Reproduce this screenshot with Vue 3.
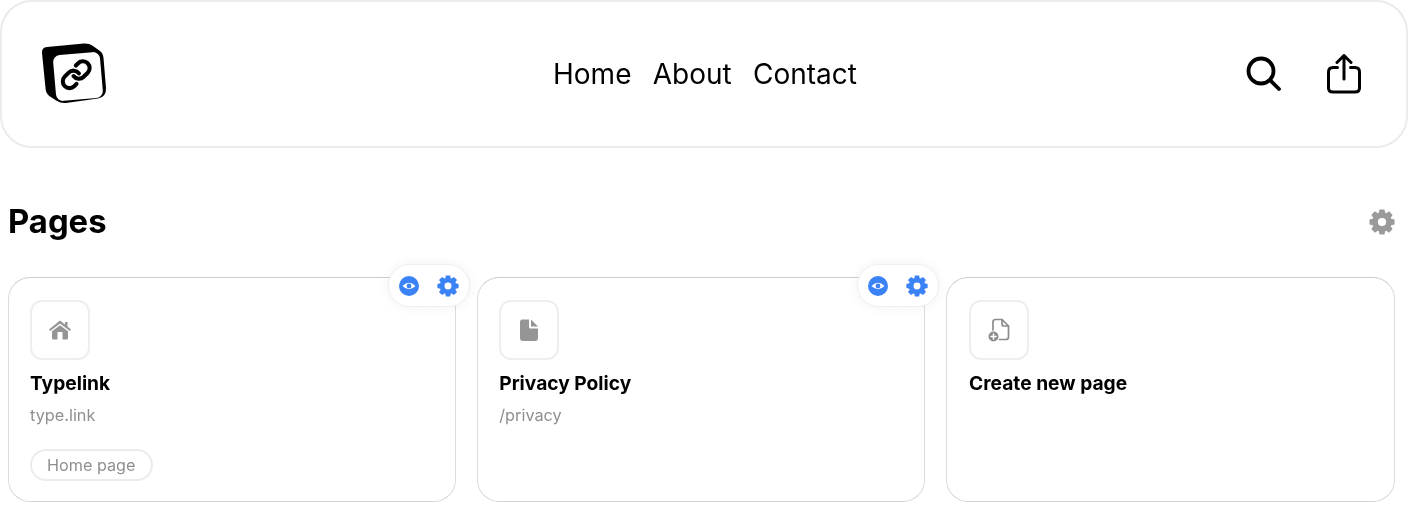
<template>
  <div class="page">
    <header class="topbar">
      <svg class="logo" width="70" height="66" viewBox="0 0 70 66">
        <path d="M7 6 L44 2.6 Q49 2.300 53 5 L60 10 Q63 12 63.500 17 L66 47 Q66.500 56 58 57.500 L26 62 Q21 62.500 17 60 L10 55.500 Q6 53 5.600 48 L2 12 Q1.600 6.500 7 6 Z" fill="#000" />
        <rect x="14.500" y="12.500" width="47" height="46" rx="7" fill="#fff" transform="rotate(-5 38 35.500)" />
        <g transform="translate(20 17.500) scale(1.350)" fill="none" stroke="#000" stroke-width="3" stroke-linecap="round" stroke-linejoin="round">
          <path d="M10 13a5 5 0 0 0 7.540.540l3-3a5 5 0 0 0-7.070-7.070l-1.720 1.710" />
          <path d="M14 11a5 5 0 0 0-7.540-.540l-3 3a5 5 0 0 0 7.070 7.070l1.710-1.710" />
        </g>
      </svg>
      <nav class="nav">
        <a v-for="item in navItems" :key="item">{{ item }}</a>
      </nav>
      <div class="actions">
        <svg width="38" height="38" viewBox="0 0 38 38" fill="none" stroke="#000" stroke-width="3.800" stroke-linecap="round">
          <circle cx="16" cy="16" r="12.500" />
          <path d="M25 25 L34 34" />
        </svg>
        <svg width="34" height="40" viewBox="0 0 34 40" fill="none" stroke="#000" stroke-width="3" stroke-linecap="round" stroke-linejoin="round">
          <path d="M17 25 V2 M10 8.500 L17 1.500 L24 8.500" />
          <path d="M10.500 13.500 H6 Q1.500 13.500 1.500 18 V34 Q1.500 38 6 38 H28 Q32.500 38 32.500 34 V18 Q32.500 13.500 28 13.500 H23.500" />
        </svg>
      </div>
    </header>

    <div class="section-head">
      <h1>Pages</h1>
      <svg class="section-gear" width="26" height="26" viewBox="0 0 24 24"><path :d="gearPath" fill="#9a9a9a" fill-rule="evenodd" /></svg>
    </div>

    <div class="cards">
      <div v-for="card in cards" :key="card.title" class="card">
        <div v-if="card.tools" class="tools">
          <svg width="20" height="20" viewBox="0 0 20 20">
            <circle cx="10" cy="10" r="10" fill="#3b82f6" />
            <path d="M3.500 10 Q10 3.500 16.500 10 Q10 16.500 3.500 10 Z" fill="#fff" />
            <circle cx="10" cy="10" r="2.400" fill="#3b82f6" />
          </svg>
          <svg width="22" height="22" viewBox="0 0 24 24"><path :d="gearPath" fill="#3b82f6" fill-rule="evenodd" /></svg>
        </div>
        <div class="icon-box">
          <svg v-if="card.icon === 'home'" width="24" height="24" viewBox="0 0 24 24" fill="#959595">
            <path d="M12 2.500 L17 6.500 V4 H19.500 V8.500 L23 11.500 L21.800 13 L12 5.400 L2.200 13 L1 11.500 Z" />
            <path fill-rule="evenodd" d="M12 7.200 L20 13.300 V20 Q20 21.500 18.500 21.500 H5.500 Q4 21.500 4 20 V13.300 Z M9.500 14 V21.500 H14.500 V14 Z" />
          </svg>
          <svg v-else-if="card.icon === 'doc'" width="24" height="24" viewBox="0 0 24 24" fill="#959595">
            <path d="M5.500 1.500 H12 V9 Q12 10.500 13.500 10.500 H21 V20 Q21 23 18 23 H6 Q3 23 3 20 V4 Q3 1.500 5.500 1.500 Z" />
            <path d="M14 1.500 L21 8.500 H14 Z" />
          </svg>
          <svg v-else width="26" height="26" viewBox="0 0 26 26" fill="none" stroke="#8c8c8c" stroke-width="1.700" stroke-linejoin="round" stroke-linecap="round">
            <path d="M7 13 V5 Q7 2.500 9.500 2.500 H16 L22.500 9 V20 Q22.500 22.500 20 22.500 H13.500" />
            <path d="M16 2.500 V7 Q16 9 18 9 H22.500" />
            <circle cx="7.500" cy="19.500" r="5" fill="#8c8c8c" stroke="none" />
            <path d="M5 19.500 H10 M7.500 17 V22" stroke="#fff" stroke-width="1.500" />
          </svg>
        </div>
        <div class="card-title">{{ card.title }}</div>
        <div v-if="card.sub" class="card-sub">{{ card.sub }}</div>
        <span v-if="card.badge" class="badge">{{ card.badge }}</span>
      </div>
    </div>
  </div>
</template>

<script setup>
const navItems = ['Home', 'About', 'Contact']

const cards = [
  { title: 'Typelink', sub: 'type.link', badge: 'Home page', icon: 'home', tools: true },
  { title: 'Privacy Policy', sub: '/privacy', icon: 'doc', tools: true },
  { title: 'Create new page', icon: 'new' },
]

// 8 tooth gear with a round hole, in a 24 box
function makeGear() {
  const pt = (r, a) => `${(12 + r * Math.cos(a)).toFixed(2)} ${(12 + r * Math.sin(a)).toFixed(2)}`
  let d = ''
  for (let i = 0; i < 8; i++) {
    const a = (i * Math.PI) / 4 - Math.PI / 2
    const step = Math.PI / 4
    d += `${i === 0 ? 'M' : 'L'}${pt(9, a - step * 0.42)} `
    d += `L${pt(11.8, a - step * 0.25)} L${pt(11.8, a + step * 0.25)} L${pt(9, a + step * 0.42)} `
  }
  d += 'Z M12 8.200 A3.800 3.800 0 1 0 12 15.800 A3.800 3.800 0 1 0 12 8.200 Z'
  return d
}
const gearPath = makeGear()
</script>

<style scoped>
.page {
  width: 1408px;
  height: 512px;
  overflow: hidden;
  box-sizing: border-box;
  background: #fff;
  color: #000;
  font-family: Inter, "Liberation Sans", sans-serif;
  will-change: transform;
}

.topbar {
  height: 148px;
  box-sizing: border-box;
  border: 2px solid #ebebeb;
  border-radius: 32px;
  display: grid;
  grid-template-columns: 513px auto 1fr;
  align-items: center;
  padding: 0 45px 0 38px;
}

.logo {
  display: block;
}

.nav {
  display: flex;
  gap: 21.250px;
  font-size: 28px;
  line-height: 34px;
}

.actions {
  display: flex;
  align-items: center;
  justify-content: flex-end;
  gap: 44px;
}

.section-head {
  height: 129px;
  display: flex;
  align-items: center;
  justify-content: space-between;
  padding: 17px 13px 0 8px;
  box-sizing: border-box;
}

.section-gear {
  margin-top: 1px;
}

h1 {
  margin: 0;
  font-size: 32.800px;
  font-weight: 700;
  line-height: 40px;
}

.cards {
  display: grid;
  grid-template-columns: repeat(3, 1fr);
  gap: 21px;
  padding: 0 13.300px 0 8px;
}

.card {
  position: relative;
  height: 225px;
  box-sizing: border-box;
  padding: 21.500px 21px;
  border: 1px solid;
  border-color: #cccccc #dcdcdc #d4d4d4 #dcdcdc;
  border-radius: 22px;
  background: #fff;
}

.card:last-child {
  padding-left: 21.600px;
}

.tools {
  position: absolute;
  top: -14px;
  right: -15px;
  z-index: 2;
  width: 82px;
  height: 43px;
  box-sizing: border-box;
  display: flex;
  align-items: center;
  justify-content: space-between;
  padding: 0 10px;
  background: #fff;
  border: 1px solid #efefef;
  border-radius: 22px;
  box-shadow: 0 0 12px rgba(0, 0, 0, 0.06);
}

.icon-box {
  width: 60px;
  height: 60px;
  box-sizing: border-box;
  border: 2px solid #eeeeee;
  border-radius: 12px;
  display: flex;
  align-items: center;
  justify-content: center;
}

.card-title {
  margin-top: 10px;
  font-size: 19.200px;
  font-weight: 700;
  line-height: 26px;
}

.card-sub {
  margin-top: 7.500px;
  font-size: 16.300px;
  line-height: 24px;
  color: #8f8f8f;
}

.badge {
  display: inline-block;
  margin-top: 22px;
  height: 32px;
  box-sizing: border-box;
  padding: 0 16px 0 15px;
  border: 2px solid #ebebeb;
  border-radius: 16px;
  font-size: 16.200px;
  line-height: 28px;
  color: #8f8f8f;
}
</style>
